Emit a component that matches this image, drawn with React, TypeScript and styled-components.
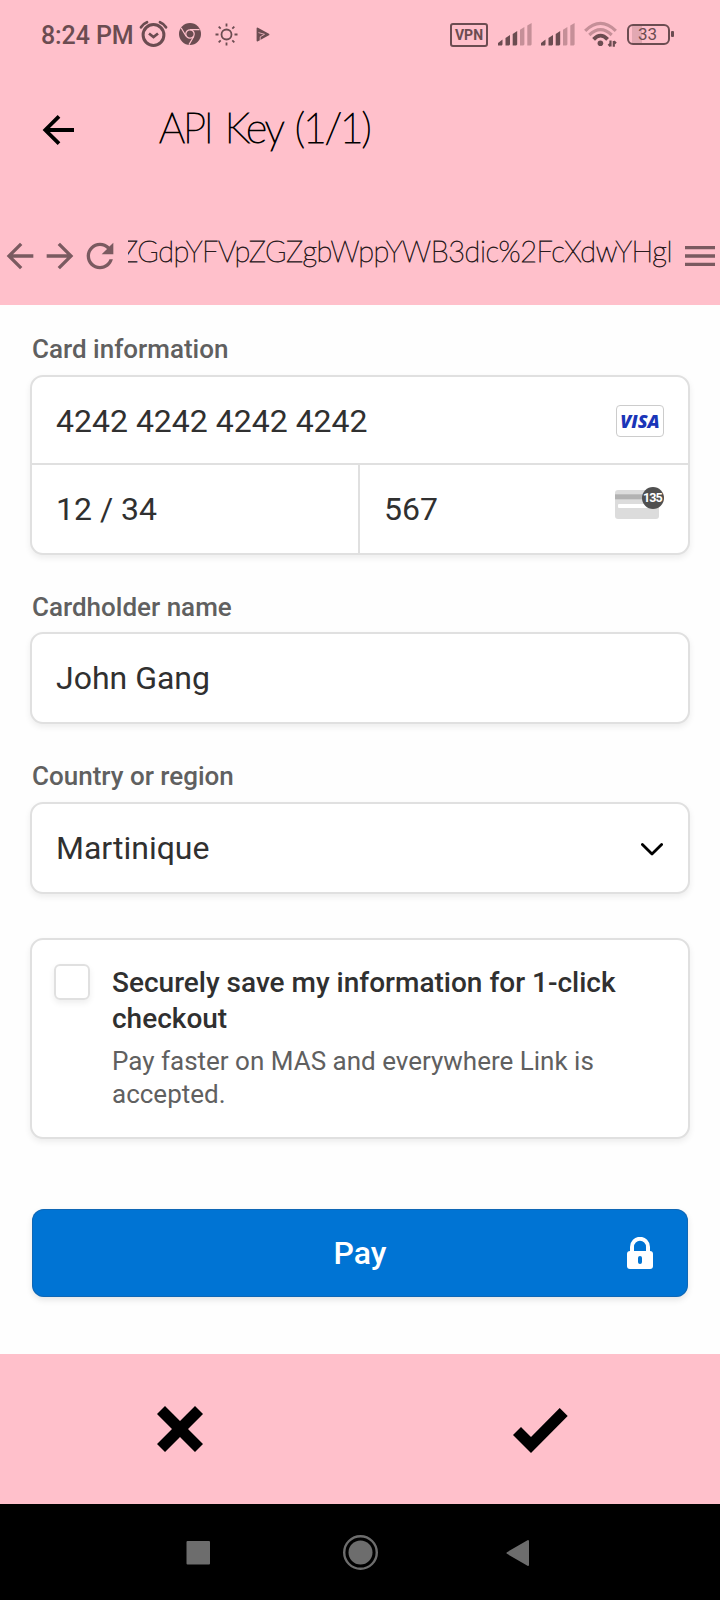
import React from 'react';
import styled, { createGlobalStyle } from 'styled-components';

const pink = '#ffc0cb';
const statusInk = '#6b4c51';
const toolInk = '#7a5a60';
const line = '#e0e0e0';
const ink = '#303030';
const muted = '#606060';

const GlobalStyle = createGlobalStyle`
  *, *::before, *::after { box-sizing: border-box; }
  body { margin: 0; background: #fff; font-family: Roboto, sans-serif; }
  svg { display: block; flex: none; }
  button { border: 0; padding: 0; margin: 0; background: none; font: inherit; color: inherit; }
`;

const Screen = styled.div`
  width: 720px;
  height: 1600px;
  display: flex;
  flex-direction: column;
  overflow: hidden;
  background: #fefefe;
`;

/* Status bar */
const StatusBar = styled.header`
  height: 68px;
  flex: none;
  display: flex;
  align-items: center;
  justify-content: space-between;
  padding: 0 46px 0 41px;
  background: ${pink};
  color: ${statusInk};
`;

const StatusGroup = styled.div`
  display: flex;
  align-items: center;
  gap: 9px;
`;

const StatusIcons = styled.div`
  display: flex;
  align-items: center;
  gap: 14px;
  margin-left: 2px;
`;

const Clock = styled.span`
  width: 89px;
  font-size: 25px;
  font-weight: 500;
  line-height: 30px;
  letter-spacing: -0.1px;
  white-space: nowrap;
  padding-top: 3px;
`;

const VpnTag = styled.span`
  width: 38px;
  height: 24px;
  margin: 1px 1px 0 0;
  border: 2.5px solid ${statusInk};
  border-radius: 3px;
  font-size: 14px;
  font-weight: 700;
  line-height: 20px;
  text-align: center;
`;

const Battery = styled.span`
  display: flex;
  align-items: center;
  gap: 1px;
  &::after {
    content: '';
    width: 3px;
    height: 6px;
    border-radius: 1px;
    background: ${statusInk};
  }
`;

const BatteryCell = styled.span`
  width: 43px;
  height: 21px;
  border: 2.5px solid ${statusInk};
  border-radius: 6px;
  font-size: 17px;
  line-height: 17px;
  text-align: center;
  padding-right: 2px;
  background: linear-gradient(90deg, transparent 3px, #e2a8b2 3px, #e2a8b2 13px, transparent 13px);
`;

/* Application header */
const AppBar = styled.div`
  height: 124px;
  flex: none;
  display: flex;
  align-items: center;
  padding-left: 34px;
  background: ${pink};
`;

const Title = styled.h1`
  margin: 0 0 5px 77px;
  font-family: Lato, sans-serif;
  font-size: 41px;
  font-weight: 100;
  line-height: 48px;
  letter-spacing: -2.1px;
  word-spacing: 3.5px;
  color: #000;
  -webkit-text-stroke: 1.1px #000;
  white-space: nowrap;
`;

const AddressBar = styled.div`
  height: 113px;
  flex: none;
  display: flex;
  align-items: center;
  padding-top: 15px;
  background: ${pink};
  color: ${toolInk};
`;

const Address = styled.div`
  width: 544px;
  margin: 0 8px 10px;
  display: flex;
  justify-content: flex-end;
  overflow: hidden;
  font-family: Lato, sans-serif;
  font-size: 29px;
  font-weight: 100;
  line-height: 40px;
  letter-spacing: -0.45px;
  color: #2a1b1e;
  -webkit-text-stroke: 0.8px #2a1b1e;
  white-space: nowrap;
`;

/* Payment form */
const Form = styled.main`
  flex: 1;
  padding: 28px 30px 0;
`;

const Label = styled.label<{ $drop?: number }>`
  display: block;
  padding: ${(p) => p.$drop ?? 0}px 0 0 2px;
  height: 42px;
  font-size: 26px;
  font-weight: 500;
  line-height: 32px;
  color: ${muted};
`;

const Panel = styled.section<{ $after: number }>`
  border: 2px solid ${line};
  border-radius: 13px;
  background: #fff;
  box-shadow: 0 3px 6px rgba(0, 0, 0, 0.07);
  margin-bottom: ${(p) => p.$after}px;
`;

const Split = styled.div`
  display: grid;
  grid-template-columns: 326px 1fr;
  border-top: 2px solid ${line};
`;

const Field = styled.div<{ $divided?: boolean }>`
  height: 88px;
  display: flex;
  align-items: center;
  justify-content: space-between;
  padding: 0 24px;
  border-left: ${(p) => (p.$divided ? `2px solid ${line}` : '0')};
  font-size: 32px;
  line-height: 40px;
  color: ${ink};
`;

const NumberField = styled(Field)`
  height: 86px;
  padding-top: 2px;
`;

const SelectField = styled(Field)`
  padding-right: 25px;
`;

const VisaMark = styled.span`
  width: 48px;
  height: 32px;
  border: 1px solid #ccc;
  border-radius: 4px;
  font-family: 'Open Sans', sans-serif;
  font-size: 18px;
  font-weight: 800;
  font-style: italic;
  line-height: 30px;
  text-align: center;
  color: #1a35b8;
`;

const CardHint = styled.span`
  position: relative;
  width: 49px;
  height: 32px;
  margin-bottom: 12px;
`;

const CodeBadge = styled.span`
  position: absolute;
  top: 0;
  right: 0;
  width: 22px;
  height: 22px;
  border-radius: 50%;
  background: #505050;
  color: #fff;
  font-family: Roboto, sans-serif;
  font-size: 12.5px;
  font-weight: 700;
  letter-spacing: -0.9px;
  text-indent: -1px;
  line-height: 22px;
  text-align: center;
`;

const SavePanel = styled(Panel)`
  height: 201px;
  display: flex;
  gap: 22px;
  padding: 24px 22px;
`;

const CheckBox = styled.span`
  width: 36px;
  height: 36px;
  flex: none;
  border: 2px solid ${line};
  border-radius: 6px;
  box-shadow: 0 3px 6px rgba(0, 0, 0, 0.07);
`;

const SaveTitle = styled.div`
  padding-top: 1px;
  font-size: 28px;
  font-weight: 500;
  line-height: 36px;
  color: ${ink};
  white-space: nowrap;
`;

const SaveText = styled.div`
  margin-top: 8px;
  font-size: 26px;
  line-height: 33px;
  color: ${muted};
  white-space: nowrap;
`;

const PayButton = styled.button`
  width: 656px;
  height: 88px;
  margin: 0 2px;
  display: grid;
  grid-template-columns: 1fr auto 1fr;
  align-items: center;
  padding: 0 35px;
  border-radius: 12px;
  background: #0074d4;
  box-shadow: inset 0 0 0 1px rgba(30, 90, 150, 0.5), 0 3px 6px rgba(0, 0, 0, 0.1);
  color: #fff;
  font-size: 32px;
  font-weight: 500;
`;

const PayText = styled.span`
  grid-column: 2;
`;

const LockSlot = styled.span`
  justify-self: end;
`;

/* Bottom bars */
const ActionBar = styled.footer`
  height: 150px;
  flex: none;
  display: grid;
  grid-template-columns: 1fr 1fr;
  background: ${pink};
`;

const Action = styled.button`
  display: flex;
  align-items: center;
  justify-content: center;
`;

const SystemNav = styled.nav`
  height: 96px;
  flex: none;
  display: flex;
  align-items: center;
  justify-content: space-between;
  padding: 1px 190px 0 186px;
  background: #000;
`;

const AlarmIcon = () => (
  <svg width="29" height="28" viewBox="0 0 29 28" fill="none" stroke={statusInk} strokeWidth="3">
    <circle cx="14.5" cy="15" r="10.4" />
    <path d="M2 7.2 Q4 4 8 2.3 M27 7.2 Q25 4 21 2.3" strokeLinecap="round" strokeWidth="2.8" />
    <path d="M10 13.5 L14.5 17 L19 13.5" strokeWidth="2.8" />
  </svg>
);

const ChromeIcon = () => (
  <svg width="22" height="22" viewBox="0 0 22 22">
    <circle cx="11" cy="11" r="11" fill={statusInk} />
    <g fill="none" stroke={pink} strokeWidth="1.2">
      <circle cx="11" cy="11" r="4.2" />
      <path d="M11 6.6 H20.5 M7.1 13.2 L2.2 5 M14.9 13.2 L10 21.6" />
    </g>
  </svg>
);

const SunIcon = () => (
  <svg width="23" height="23" viewBox="0 0 23 23" fill="none" stroke={statusInk} strokeWidth="1.8">
    <circle cx="11.5" cy="11.5" r="5" />
    <path d="M11.5 0.5v3M11.5 19.5v3M0.5 11.5h3M19.5 11.5h3M3.7 3.7l2 2M17.3 17.3l2 2M3.7 19.3l2-2M17.3 5.7l2-2" />
  </svg>
);

const PlayIcon = () => (
  <svg width="18" height="15" viewBox="-4 0 18 15">
    <path d="M1.5 1.5 L12.5 7.5 L1.5 13.5 Z" fill={statusInk} stroke={statusInk} strokeWidth="1.8" strokeLinejoin="round" />
    <path d="M2.5 5.6 L8.5 7.3 L4.2 9.8 V13" fill="none" stroke={pink} strokeWidth="0.8" />
  </svg>
);

const SignalIcon = () => (
  <svg width="34" height="23" viewBox="0 0 34 23">
    <g fill={statusInk}>
      <path d="M0 22.5V20L4.5 16.5V21.5L3.8 22.5Z" />
      <path d="M7.5 22.5V15L12 12V21.5L11 22.5Z" />
      <path d="M14.7 22.5V11L19.2 8V21.5L18.2 22.5Z" />
    </g>
    <g fill="#c58f98">
      <path d="M22 22.5V6.7L26.4 4V21.5L25.4 22.5Z" />
      <path d="M29.3 22.5V2.5L33.6 0V21.5L32.6 22.5Z" />
    </g>
  </svg>
);

const WifiIcon = () => (
  <svg width="34" height="27" viewBox="0 0 34 27" fill="none" strokeWidth="3.2">
    <path d="M1.2 9.8 Q16.5 -5 31.8 9.8" stroke="#c58f98" />
    <path d="M5.3 14 Q16.5 3.2 27.7 14" stroke="#c58f98" />
    <path d="M9.6 18.4 Q16.5 11 23.6 18.4" stroke={statusInk} strokeWidth="3.8" />
    <circle cx="16.4" cy="22.3" r="2.8" fill={statusInk} />
    <path d="M26.5 19.5V25.5M24.5 23L26.5 25.2M29.8 25.8V20M32 22.4L29.8 20.4" stroke={statusInk} strokeWidth="2.2" />
  </svg>
);

const ArrowIcon = ({ size, flip }: { size: number; flip?: boolean }) => (
  <svg width={size} height={size} viewBox="0 0 24 24" fill="currentColor">
    <path
      transform={flip ? 'rotate(180 12 12)' : undefined}
      d="M20 11H7.83l5.59-5.59L12 4l-8 8 8 8 1.41-1.41L7.83 13H20v-2z"
    />
  </svg>
);

const BackIcon = () => (
  <svg width="48" height="48" viewBox="0 0 48 48" fill="none" stroke="#000" strokeWidth="3.8">
    <path d="M40 24 H11 M25 10.3 L11.3 24 L25 37.7" />
  </svg>
);

const ReloadIcon = () => (
  <svg width="40" height="40" viewBox="0 0 24 24" fill="currentColor">
    <path d="M17.65 6.35C16.2 4.9 14.21 4 12 4c-4.42 0-7.99 3.58-7.99 8s3.57 8 7.99 8c3.73 0 6.84-2.55 7.73-6h-2.08c-.82 2.33-3.04 4-5.65 4-3.31 0-6-2.69-6-6s2.69-6 6-6c1.66 0 3.14.69 4.22 1.78L13 11h7V4l-2.35 2.35z" />
  </svg>
);

const MenuIcon = () => (
  <svg width="40" height="40" viewBox="0 0 24 24" fill="currentColor">
    <path d="M3 18h18v-2H3v2zm0-5h18v-2H3v2zm0-7v2h18V6H3z" />
  </svg>
);

const CardIcon = () => (
  <svg width="44" height="32" viewBox="0 0 44 32">
    <rect y="3" width="44" height="29" rx="3" fill="#dcdcdc" />
    <rect y="7.3" width="44" height="5" fill="#b2b2b2" />
    <rect x="3" y="17" width="35" height="4" rx="1" fill="#fff" />
  </svg>
);

const ChevronIcon = () => (
  <svg width="22" height="15" viewBox="0 -2 22 15" fill="none" stroke="#000" strokeWidth="2.8">
    <path d="M1.4 1.5 L11 11 L20.6 1.5" strokeLinecap="round" strokeLinejoin="round" />
  </svg>
);

const LockIcon = () => (
  <svg width="26" height="32" viewBox="0 0 26 32">
    <path d="M5 15 V10 A8 8.2 0 0 1 21 10 V15" fill="none" stroke="#fff" strokeWidth="4" />
    <rect y="14" width="26" height="18" rx="3" fill="#fff" />
    <rect x="11" y="19" width="4" height="8" rx="2" fill="#0074d4" />
  </svg>
);

const CrossIcon = () => (
  <svg width="46" height="46" viewBox="0 0 46 46">
    <path d="M8 0 L23 15 L38 0 L46 8 L31 23 L46 38 L38 46 L23 31 L8 46 L0 38 L15 23 L0 8 Z" />
  </svg>
);

const TickIcon = () => (
  <svg width="55" height="47" viewBox="0 -2 55 47">
    <path d="M0 27 L8 19 L18 29 L46.7 0 L54.7 8 L18 45 Z" />
  </svg>
);

export default function App() {
  return (
    <>
      <GlobalStyle />
      <Screen>
        <StatusBar>
          <StatusGroup>
            <Clock>8:24 PM</Clock>
            <AlarmIcon />
            <StatusIcons>
              <ChromeIcon />
              <SunIcon />
              <PlayIcon />
            </StatusIcons>
          </StatusGroup>
          <StatusGroup>
            <VpnTag>VPN</VpnTag>
            <SignalIcon />
            <SignalIcon />
            <WifiIcon />
            <Battery>
              <BatteryCell>33</BatteryCell>
            </Battery>
          </StatusGroup>
        </StatusBar>

        <AppBar>
          <BackIcon />
          <Title>API Key (1/1)</Title>
        </AppBar>

        <AddressBar>
          <ArrowIcon size={40} />
          <ArrowIcon size={40} flip />
          <ReloadIcon />
          <Address>
            <span>ZGdpYFVpZGZgbWppYWB3dic%2FcXdwYHgl</span>
          </Address>
          <MenuIcon />
        </AddressBar>

        <Form>
          <Label>Card information</Label>
          <Panel $after={35}>
            <NumberField>
              4242 4242 4242 4242
              <VisaMark>VISA</VisaMark>
            </NumberField>
            <Split>
              <Field>12 / 34</Field>
              <Field $divided>
                567
                <CardHint>
                  <CardIcon />
                  <CodeBadge>135</CodeBadge>
                </CardHint>
              </Field>
            </Split>
          </Panel>

          <Label $drop={1}>Cardholder name</Label>
          <Panel $after={36}>
            <Field>John Gang</Field>
          </Panel>

          <Label>Country or region</Label>
          <Panel $after={44}>
            <SelectField>
              Martinique
              <ChevronIcon />
            </SelectField>
          </Panel>

          <SavePanel $after={70}>
            <CheckBox />
            <div>
              <SaveTitle>
                Securely save my information for 1-click
                <br />
                checkout
              </SaveTitle>
              <SaveText>
                Pay faster on MAS and everywhere Link is
                <br />
                accepted.
              </SaveText>
            </div>
          </SavePanel>

          <PayButton>
            <PayText>Pay</PayText>
            <LockSlot>
              <LockIcon />
            </LockSlot>
          </PayButton>
        </Form>

        <ActionBar>
          <Action>
            <CrossIcon />
          </Action>
          <Action>
            <TickIcon />
          </Action>
        </ActionBar>

        <SystemNav>
          <svg width="24" height="24" viewBox="0 0 24 24">
            <rect x="0.5" width="23.5" height="23.5" rx="1" fill="#6d6d6d" />
          </svg>
          <svg width="42" height="36" viewBox="0 0 42 36">
            <circle cx="23.5" cy="17.5" r="16.3" fill="none" stroke="#6d6d6d" strokeWidth="2.4" />
            <circle cx="23.5" cy="17.5" r="12" fill="#6d6d6d" />
          </svg>
          <svg width="24" height="28" viewBox="0 0 24 28">
            <path d="M1.5 14 L22 2 V26 Z" fill="#6d6d6d" stroke="#6d6d6d" strokeWidth="2" strokeLinejoin="round" />
          </svg>
        </SystemNav>
      </Screen>
    </>
  );
}
